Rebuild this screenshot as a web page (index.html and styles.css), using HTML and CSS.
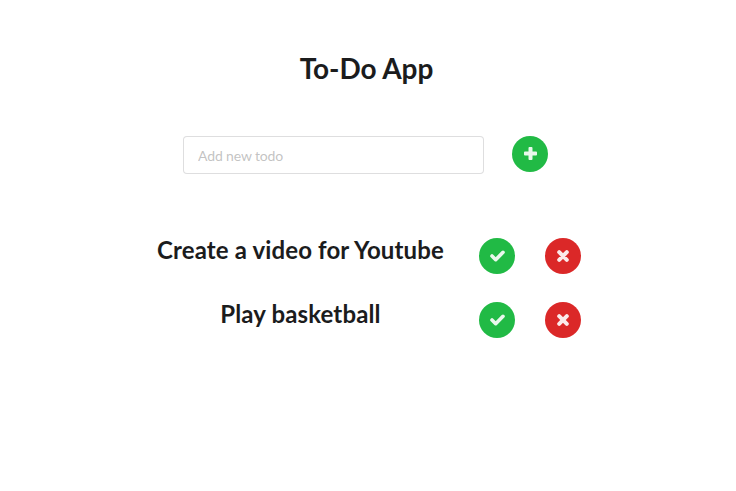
FILE: index.html
```html
<!DOCTYPE html>
<html lang="en">
<head>
<meta charset="utf-8">
<title>To-Do App</title>
<link rel="stylesheet" href="styles.css">
</head>
<body>
<svg class="defs" width="0" height="0" aria-hidden="true">
  <symbol id="plus" viewBox="0 0 13 13"><path d="M5.4 0h2.2q.9 0 .9.9v3.6h3.6q.9 0 .9.9v2.2q0 .9-.9.9H8.5v3.6q0 .9-.9.9H5.4q-.9 0-.9-.9V8.5H.9Q0 8.500 0 7.600V5.400q0-.9.9-.9h3.600V.9q0-.9.9-.9z"/></symbol>
  <symbol id="check" viewBox="0 0 15 12"><path class="stroke" d="M2 6l3.700 3.700L13 2.300"/></symbol>
  <symbol id="cross" viewBox="0 0 12 12"><path class="stroke thick" d="M2.200 2.200l7.600 7.600M9.800 2.200l-7.600 7.600"/></symbol>
</svg>
<main class="app">
  <h1 class="title">To-Do App</h1>
  <form class="add">
    <input class="field" type="text" placeholder="Add new todo">
    <button class="btn green" type="button" aria-label="Add"><svg class="plus"><use href="#plus"/></svg></button>
  </form>
  <ul class="list">
    <li class="item">
      <h2 class="name">Create a video for Youtube</h2>
      <button class="btn green" type="button" aria-label="Done"><svg class="check"><use href="#check"/></svg></button>
      <button class="btn red" type="button" aria-label="Delete"><svg class="cross"><use href="#cross"/></svg></button>
    </li>
    <li class="item">
      <h2 class="name">Play basketball</h2>
      <button class="btn green" type="button" aria-label="Done"><svg class="check"><use href="#check"/></svg></button>
      <button class="btn red" type="button" aria-label="Delete"><svg class="cross"><use href="#cross"/></svg></button>
    </li>
  </ul>
</main>
</body>
</html>
```
FILE: styles.css
```css
* { box-sizing: border-box; }
body {
  margin: 0;
  background: #fff;
  color: #1b1c1d;
  font: 14px/1.2857 Lato, sans-serif;
}
.defs { display: none; }
.app { padding-top: 50px; }
.title {
  width: 733px;
  margin: 0;
  font-size: 28px;
  line-height: 36px;
  font-weight: 700;
  letter-spacing: -.08px;
  text-align: center;
}
.add {
  display: flex;
  gap: 28px;
  margin: 50px 0 0 183px;
}
.field {
  width: 301px;
  height: 38px;
  padding: 9px 14px;
  border: 1px solid rgba(34, 36, 38, .15);
  border-radius: 4px;
  font: 14px/17px Lato, sans-serif;
  letter-spacing: -.14px;
}
.field::placeholder { color: rgba(191, 191, 191, .95); }
.btn {
  display: flex;
  align-items: center;
  justify-content: center;
  width: 36px;
  height: 36px;
  padding: 0 0 1px 1px;
  border: 0;
  border-radius: 50%;
}
.green { background: #21ba45; }
.red { background: #db2828; }
.btn svg { fill: #fff; opacity: .9; }
.plus { width: 13px; height: 13px; }
.check { width: 15px; height: 12px; }
.stroke {
  fill: none;
  stroke: #fff;
  stroke-width: 3.6;
  stroke-linecap: round;
  stroke-linejoin: round;
}
.thick { stroke-width: 4; }
.cross { width: 12px; height: 12px; }
.list {
  display: grid;
  gap: 28px;
  margin: 64px 0 0 150px;
  padding: 0;
  list-style: none;
}
.item {
  display: grid;
  grid-template-columns: 299px 36px 36px;
  column-gap: 30px;
  height: 36px;
}
.item .red { padding-left: 0; }
.name {
  margin: -4px -2px 0 0;
  font-size: 24px;
  line-height: 31px;
  font-weight: 700;
  letter-spacing: .13px;
  text-align: center;
  white-space: nowrap;
}
```
